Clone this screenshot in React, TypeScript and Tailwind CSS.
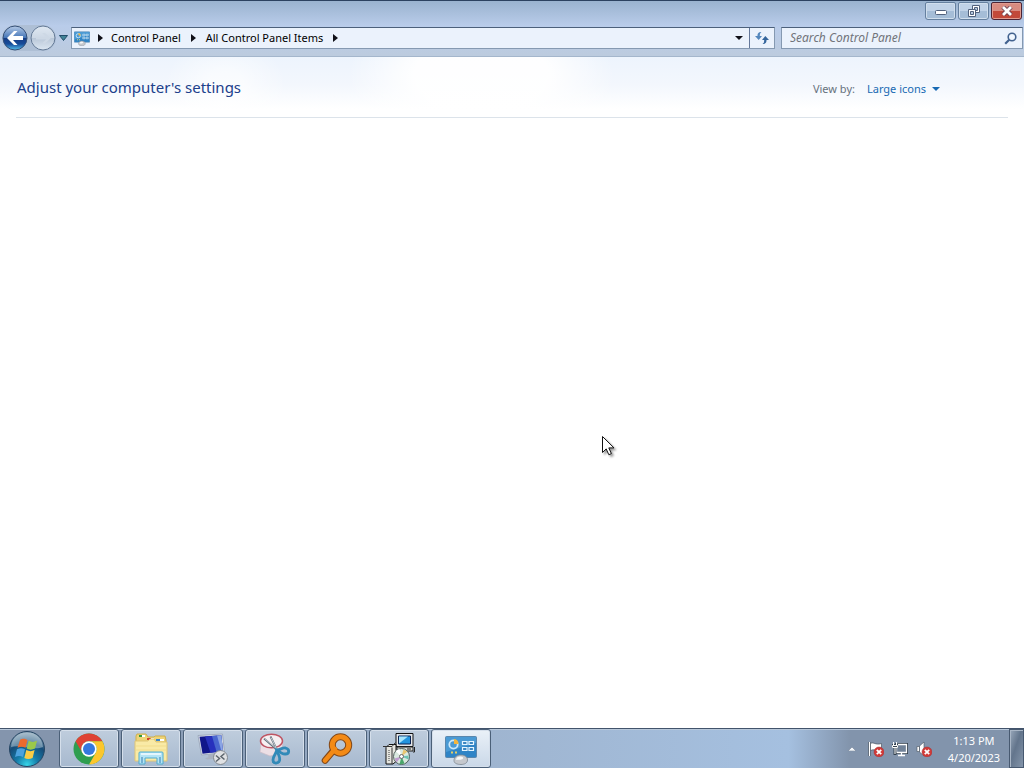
import React from 'react';

const PanelIcon = ({ className }: { className: string }) => (
    <svg viewBox="0 0 32 32" className={className} aria-hidden="true">
        <rect x="0.5" y="3.5" width="31" height="21" rx="1" fill="#2f84c6" stroke="#5a87ad" />
        <path d="M1 4h30v6L1 19z" fill="#59a6dc" opacity="0.65" />
        <circle cx="8.5" cy="11.5" r="4.200" fill="none" stroke="#cbe8fa" strokeWidth="1.800" />
        <path d="M9 11V6a5 5 0 0 1 4.500 5z" fill="#f4b53c" />
        <path d="M17.500 8.500h4.500v3h-4.500zM24 8.500h4.500v3H24zM17.500 14.500h4.500v3h-4.500zM24 14.500h4.500v3H24z" fill="#3c86c0" stroke="#e4f5ff" strokeWidth="1.200" />
        <path d="M6 19.500h2M10 19.500h2" stroke="#e5cf67" strokeWidth="2" />
        <path d="M9 27.500c0-3.500 3-5.500 7-5.500s6.500 2 6.500 5-3 4.500-6.500 4.500-7-1-7-4z" fill="#c5c8cd" stroke="#7e8790" strokeWidth="0.800" />
        <path d="M11 27c0-3 3-3.800 5-3.500 2.500.3 3 2 1 2.800s-4.500.2-6 .7z" fill="#f6f7f8" />
    </svg>
);

const ChromeIcon = () => (
    <svg viewBox="0 0 32 32" className="h-8 w-8" aria-hidden="true">
        <circle cx="16" cy="16" r="15.500" fill="#2f9e50" />
        <path d="M2.600 8.250A15.500 15.500 0 0 1 29.400 8.250H16A7.750 7.750 0 0 0 9.300 19.900z" fill="#df4335" />
        <path d="M29.400 8.250A15.500 15.500 0 0 1 16 31.500l6.700-11.600A7.750 7.750 0 0 0 16 8.250z" fill="#fbc62d" />
        <circle cx="16" cy="16" r="7.750" fill="#fff" />
        <circle cx="16" cy="16" r="6" fill="#3478df" />
    </svg>
);

const ExplorerIcon = () => (
    <svg viewBox="0 0 34 32" className="h-8 w-[34px]" aria-hidden="true">
        <path d="M2 3l1-2h9l2 3h6l1-1h10l1 4v20H2z" fill="#eed477" stroke="#cdae4f" />
        <path d="M5 2h4v2H5z" fill="#2f9a3c" />
        <path d="M13 5h4v2h-4z" fill="#d6402f" />
        <path d="M22 6h4v2h-4z" fill="#3d86ca" />
        <path d="M8 2h3v2H8zM17 5h3v2h-3zM26 6h4v2h-4z" fill="#fff" />
        <path d="M1 8h13l2-2h4l2 3h11v19H1z" fill="#f9eaa6" stroke="#dfc577" />
        <path d="M2 13h30M2 17h30" stroke="#f1dc8b" />
        <path d="M5 31V20q0-1 1-1h22q1 0 1 1v11h-6v-6H11v6z" fill="#b4e4f5" stroke="#51acce" />
        <path d="M7 21h20" stroke="#f4fcff" strokeWidth="1.500" />
        <path d="M8 24v6M26 24v6" stroke="#5e9fc9" strokeWidth="1.500" />
    </svg>
);

const RemoteDesktopIcon = () => (
    <svg viewBox="0 0 32 32" className="h-8 w-8" aria-hidden="true">
        <path d="M1 2.500L25.500 1l2 18.500L4.500 22z" fill="#d9dfe8" stroke="#8f9bb0" strokeWidth="0.700" />
        <path d="M2.500 3.700L24.300 2.300l1.700 16L5.500 20.700z" fill="#10168a" />
        <path d="M8 3.400l8-.500 3.500 16.200-6 .700z" fill="#2731bd" />
        <path d="M15 3l9.300-.700 1.700 16-6.500.800z" fill="#4967cf" />
        <path d="M20 2.600l4.300-.300 1.700 16-1.500.200z" fill="#8aa4e4" />
        <path d="M11 21.400l6-.700 1 3 3 1.500-11 1.300-2-1.200 3.500-1z" fill="#a9b1bf" />
        <circle cx="23.500" cy="24.500" r="7" fill="#dfe1e4" stroke="#83898f" />
        <path d="M19 22.500l3.500 3L19 28.500M27.500 20.500l-3.500 3 3.500 3" fill="none" stroke="#5d656d" strokeWidth="1.500" />
    </svg>
);

const SnippingIcon = () => (
    <svg viewBox="0 0 32 32" className="h-8 w-8" aria-hidden="true">
        <path d="M2 10l-1 9 10 4 11-3 2-10z" fill="#ecdfe5" stroke="#cdbcc7" strokeWidth="0.700" />
        <ellipse cx="12.500" cy="8" rx="11" ry="6.800" fill="#f6f0f2" stroke="#bf5563" strokeWidth="1.500" />
        <path d="M5 5.500l15 13M11.500 3.500l7.500 15.500" stroke="#66727d" strokeWidth="1.800" />
        <path d="M5.500 5.500l13 11M12 4.500l6 12" stroke="#e4e9ed" strokeWidth="0.700" />
        <path d="M18.500 17c2 0 5-2.500 8-2 4.500 1 4 6 0 6-3.500.2-6-2-8-4z" fill="none" stroke="#328ab8" strokeWidth="2.800" />
        <path d="M17.500 18c2 3 4 6 3 9.500-1.200 3.500-6.500 3.500-6.500-.5 0-3.500 2.500-5.500 3.500-9z" fill="none" stroke="#328ab8" strokeWidth="2.800" />
    </svg>
);

const SearchToolIcon = () => (
    <svg viewBox="0 0 32 32" className="h-8 w-8" aria-hidden="true">
        <path d="M12 18L4 27.500" stroke="#81481a" strokeWidth="6.600" strokeLinecap="round" />
        <circle cx="19.500" cy="12" r="8.200" fill="none" stroke="#81481a" strokeWidth="7" />
        <path d="M14 16L4 27.500" stroke="#f38a16" strokeWidth="4.500" strokeLinecap="round" />
        <circle cx="19.500" cy="12" r="8.200" fill="none" stroke="#f38a16" strokeWidth="5" />
    </svg>
);

const InstallerIcon = () => (
    <svg viewBox="0 0 32 32" className="h-8 w-8" aria-hidden="true">
        <path d="M13 .5h17v13H13z" fill="#e5e7e9" stroke="#111" />
        <path d="M15.500 3h12v8h-12z" fill="#2394df" stroke="#0b2352" />
        <path d="M16 10.500l9-7h-9z" fill="#a8e4fb" />
        <path d="M14 14h16v4H14z" fill="#d8d9d5" stroke="#222" />
        <path d="M24 16h4" stroke="#222" />
        <path d="M30 19h1.500v-5" fill="none" stroke="#222" />
        <path d="M3 14.500l3-3h7v17l-3 2.500H3z" fill="#e5e5df" stroke="#111" />
        <path d="M9 14.500V31M0 13.500h9l3.500-4" stroke="#333" fill="none" />
        <path d="M6 17v12" stroke="#777" strokeWidth="1.500" strokeDasharray="1 1" />
        <circle cx="18.500" cy="23.500" r="8" fill="#d9e8df" stroke="#50605d" />
        <path d="M18.500 23.500L12.500 18l4-2z" fill="#fff" />
        <path d="M18.500 23.500l2-7 4 2z" fill="#e8c56f" />
        <path d="M18.500 23.500l7-1v4z" fill="#6cc3b2" />
        <path d="M18.500 23.500l3 7-5 1z" fill="#49a66b" />
        <path d="M18.500 23.500l-7 2 2 4z" fill="#bf9dce" />
        <circle cx="18.500" cy="23.500" r="2" fill="#fff" stroke="#666" />
    </svg>
);

const StartIcon = () => (
    <svg viewBox="0 0 38 38" className="h-[38px] w-[38px]" aria-hidden="true">
        <defs>
            <radialGradient id="orb" cx="50%" cy="95%" r="90%">
                <stop offset="0" stopColor="#37d5e8" />
                <stop offset="0.350" stopColor="#157ba8" />
                <stop offset="0.700" stopColor="#164c78" />
                <stop offset="1" stopColor="#819cb2" />
            </radialGradient>
        </defs>
        <circle cx="19" cy="19" r="17.500" fill="url(#orb)" stroke="#254563" />
        <path d="M3 17C4 7 11 2.500 19 2.500S34 7 35 17c-9 4-22-3-32 0z" fill="#d9e6ed" opacity="0.420" />
        <path d="M12 10c3-2 5-1 7.500 0l-2 7.800c-3-1.500-5-1.500-8 0z" fill="#ec6a2e" />
        <path d="M20.700 10.800c3 1.500 5 1.500 8.300 0l-2 7.800c-3 1.600-6 1.400-8.300 0z" fill="#9bc94a" />
        <path d="M9 19.300c3-1.500 5-1.500 8 0l-2 7.700c-3-1.500-5-1.500-8 0z" fill="#4ca2de" />
        <path d="M18.300 20c3 1.500 5.500 1.500 8.300 0l-2 8c-3 1.500-6 1.300-8.300 0z" fill="#fbcc45" />
    </svg>
);

const tasks = [
    { name: 'Google Chrome', icon: <ChromeIcon /> },
    { name: 'Windows Explorer', icon: <ExplorerIcon /> },
    { name: 'Remote Desktop', icon: <RemoteDesktopIcon /> },
    { name: 'Snipping Tool', icon: <SnippingIcon /> },
    { name: 'Search', icon: <SearchToolIcon /> },
    { name: 'Installer', icon: <InstallerIcon /> },
    { name: 'Control Panel', icon: <PanelIcon className="h-8 w-8" />, active: true },
];

const captionButton = 'flex h-[18px] w-[31px] items-center justify-center rounded-b-[3px] rounded-t-[2px] border border-[#65809f] bg-linear-to-b from-[#c0d2e7] from-50% to-[#a5bdd7] to-50% shadow-[inset_0_0_0_1px_#d0deed]';

const Crumb = ({ children }: { children: string }) => (
    <>
        <button className="leading-4">{children}</button>
        <svg viewBox="0 0 5 8" className="mx-[10px] h-2 w-[5px]" aria-hidden="true"><path d="M0 0l5 4-5 4z" fill="#101018" /></svg>
    </>
);

const WindowFrame = () => (
    <header className="border-b border-t border-[#a4b6cc] border-t-[#2c4260] bg-linear-to-b from-[#9ab3cf] via-[#b9ccea] via-45% to-[#bccbde]">
        <div className="flex justify-end gap-[2px] px-[2px] pt-px">
            <button aria-label="Minimize" className={captionButton}>
                <svg viewBox="0 0 12 6" className="mt-1 h-[6px] w-3"><rect x="0.500" y="0.500" width="11" height="4" rx="1" fill="#fff" stroke="#51617c" /></svg>
            </button>
            <button aria-label="Restore" className={captionButton}>
                <svg viewBox="0 0 12 12" className="h-3 w-3">
                    <path d="M4.500.5h7v7h-7z" fill="#fff" stroke="#51617c" />
                    <path d="M6.500 2.500h3v3h-3z" fill="#b4c8de" stroke="#51617c" />
                    <path d="M.5 4.500h7v7h-7z" fill="#fff" stroke="#51617c" />
                    <path d="M2.500 6.500h3v3h-3z" fill="#b4c8de" stroke="#51617c" />
                </svg>
            </button>
            <button aria-label="Close" className="flex h-[18px] w-[31px] items-center justify-center rounded-b-[3px] rounded-t-[2px] border border-[#4c2434] bg-linear-to-b from-[#d88b80] from-50% to-[#c2493a] to-50% shadow-[inset_0_0_0_1px_#e09b8f]">
                <svg viewBox="0 0 12 10" className="h-[10px] w-3"><path d="M2 1l8 8m0-8L2 9" stroke="#6b4050" strokeWidth="4.500" /><path d="M2 1l8 8m0-8L2 9" stroke="#fff" strokeWidth="2.800" /></svg>
            </button>
        </div>

        {/* Navigation row */}
        <div className="flex items-center pb-[5px] pl-[2px] pr-px pt-[5px]">
            <div className="flex items-center gap-[2px] rounded-full bg-[#aebfd5]">
                <button aria-label="Back">
                    <svg viewBox="0 0 26 26" className="h-[26px] w-[26px]">
                        <defs>
                            <linearGradient id="back" x2="0" y2="1">
                                <stop offset="0" stopColor="#b6cbe7" />
                                <stop offset="0.480" stopColor="#4777b9" />
                                <stop offset="0.500" stopColor="#163c84" />
                                <stop offset="0.750" stopColor="#174c9a" />
                                <stop offset="1" stopColor="#58c2ef" />
                            </linearGradient>
                        </defs>
                        <circle cx="13" cy="13" r="12" fill="url(#back)" stroke="#365077" />
                        <path d="M5 13l7-7h3.500l-4.500 5H21v4H11l4.500 5H12z" fill="#fff" />
                    </svg>
                </button>
                <button aria-label="Forward">
                    <svg viewBox="0 0 26 26" className="h-[26px] w-[26px]">
                        <defs>
                            <linearGradient id="forward" x2="0" y2="1">
                                <stop offset="0" stopColor="#dfe8f2" />
                                <stop offset="0.490" stopColor="#cdd8e5" />
                                <stop offset="0.510" stopColor="#b9c7d8" />
                                <stop offset="1" stopColor="#dce7f2" />
                            </linearGradient>
                        </defs>
                        <circle cx="13" cy="13" r="12" fill="url(#forward)" stroke="#647a97" />
                        <path d="M21 13l-6-5h-3l4 4H6v2.500h10l-4 4h3z" fill="#cdd8e5" />
                    </svg>
                </button>
            </div>
            <button aria-label="Recent pages" className="mx-[3px]">
                <svg viewBox="0 0 9 6" className="h-[6px] w-[9px]"><path d="M.5.5h8l-4 5z" fill="#418497" stroke="#214c6a" /></svg>
            </button>
            <div className="flex h-[22px] min-w-0 flex-1 items-center border border-[#8599b1] border-t-[#4c607b] bg-[#ebf2fc] text-[11px] text-black">
                <PanelIcon className="ml-[2px] h-4 w-4 shrink-0" />
                <svg viewBox="0 0 5 8" className="mx-2 h-2 w-[5px]" aria-hidden="true"><path d="M0 0l5 4-5 4z" fill="#101018" /></svg>
                <Crumb>Control Panel</Crumb>
                <Crumb>All Control Panel Items</Crumb>
                <button aria-label="Previous locations" className="ml-auto px-[6px]">
                    <svg viewBox="0 0 8 4" className="h-1 w-2"><path d="M0 0h8L4 4z" fill="#101018" /></svg>
                </button>
                <button aria-label="Refresh" className="flex h-full w-[25px] items-center justify-center border-l border-[#63779a]">
                    <svg viewBox="0 0 14 12" className="h-3 w-[14px]">
                        <path d="M6.500 0C3 0 2.500 2 2.500 4H0l3.700 4L7 4H4.800c0-2 .2-3 1.700-4z" fill="#5487bd" />
                        <path d="M7.500 12c3.500 0 4-2 4-4H14l-3.700-4L7 8h2.200c0 2-.2 3-1.700 4z" fill="#34659c" />
                    </svg>
                </button>
            </div>
            <div className="ml-[6px] flex h-[22px] w-[242px] items-center border border-[#8599b1] border-t-[#4c607b] bg-[#ebf2fc] pl-2 pr-[5px]">
                <input type="text" aria-label="Search Control Panel" placeholder="Search Control Panel" className="min-w-0 flex-1 bg-transparent text-xs italic text-[#333] outline-none placeholder:text-[#71747b]" />
                <button aria-label="Search">
                    <svg viewBox="0 0 13 13" className="h-[13px] w-[13px]"><circle cx="8" cy="5" r="3.800" fill="#f0f7ff" stroke="#42628f" strokeWidth="1.600" /><path d="M5.200 7.800L1.200 11.800" stroke="#42628f" strokeWidth="2.200" /></svg>
                </button>
            </div>
        </div>
    </header>
);

const ErrorBadge = () => (
    <>
        <circle cx="11" cy="11" r="5" fill="#d23b38" stroke="#a53137" strokeWidth="0.500" />
        <path d="M8.800 8.800l4.400 4.400m0-4.400l-4.400 4.400" stroke="#fff" strokeWidth="1.800" />
    </>
);

const Taskbar = () => (
    <footer className="flex h-10 shrink-0 border-t border-[#42536b] bg-[linear-gradient(90deg,#8495ad_0%,#8495ad_6%,#9fb5d0_48%,#a5c0e0_77%,#8294ac_83%,#8294ac_100%)] shadow-[inset_0_1px_0_#b8c8da]">
        <button aria-label="Start" className="mr-[13px] pl-2"><StartIcon /></button>
        <nav className="flex gap-[2px]" aria-label="Running programs">
            {tasks.map((task) => (
                <button
                    key={task.name}
                    aria-label={task.name}
                    className={`flex h-full w-[60px] items-center justify-center rounded-[3px] border border-[#4b6078] bg-linear-to-b shadow-[inset_0_0_0_1px_#d5dfeb] ${task.active ? 'from-[#eaf1f8] to-[#cad8e8]' : 'from-[#bfcddd] to-[#a7b9cf]'}`}
                >
                    {task.icon}
                </button>
            ))}
        </nav>
        <div className="ml-auto flex items-center">
            <button aria-label="Show hidden icons" className="mr-3">
                <svg viewBox="0 0 8 4" className="h-1 w-2"><path d="M0 4h8L4 0z" fill="#f4f7fa" stroke="#66758a" strokeWidth="0.500" /></svg>
            </button>
            <div className="flex gap-2">
                <button aria-label="Action Center">
                    <svg viewBox="0 0 16 16" className="h-4 w-4">
                        <path d="M1.500 15V1" stroke="#394653" strokeWidth="2.500" /><path d="M1.500 15V1" stroke="#fff" strokeWidth="1.300" />
                        <path d="M2.500 2.500c3-2 5 2 11 0v6c-5 2-8-1-11 1z" fill="#fff" stroke="#4c5661" strokeWidth="0.700" />
                        <ErrorBadge />
                    </svg>
                </button>
                <button aria-label="Network">
                    <svg viewBox="0 0 16 16" className="h-4 w-4">
                        <path d="M4.500 3.500h10v8h-10z" fill="#75869c" stroke="#303c49" strokeWidth="3" />
                        <path d="M4.500 3.500h10v8h-10zM9.500 12v2M6 14.500h7" fill="#718298" stroke="#fff" strokeWidth="1.300" />
                        <path d="M0 3h6v4H4.500v7h-3V7H0z" fill="#35424f" />
                        <path d="M1.500 1v4M4.500 1v4M.5 4.500h5v2h-5zM3 6v7" fill="none" stroke="#fff" />
                    </svg>
                </button>
                <button aria-label="Volume, muted">
                    <svg viewBox="0 0 16 16" className="h-4 w-4">
                        <path d="M1 5.500h2l5-4.500v14l-5-4.500H1z" fill="#fff" stroke="#485360" strokeWidth="0.600" />
                        <path d="M3.500 5v6" stroke="#6a7480" />
                        <ErrorBadge />
                    </svg>
                </button>
            </div>
            <button className="ml-4 mr-[9px] text-center text-[11px] leading-[17px] text-white">
                <time dateTime="2023-04-20T13:13" className="flex flex-col"><span>1:13 PM</span><span>4/20/2023</span></time>
            </button>
            <button aria-label="Show desktop" className="h-full w-[15px] border border-[#475970] bg-linear-to-br from-[#9aa9bb] via-[#63758c] via-45% to-[#8495aa] shadow-[inset_1px_1px_0_#a9b6c6]" />
        </div>
    </footer>
);

const App = () => {
    return (
        <div className="relative flex h-screen flex-col overflow-hidden bg-white font-['Noto_Sans','Open_Sans',sans-serif]">
            <WindowFrame />
            <main className="min-h-0 flex-1">
                {/* Pale sky with soft clouds behind the heading */}
                <div className="bg-[radial-gradient(ellipse_13%_120%_at_47%_30%,#fffffff0_50%,#ffffff00_100%),radial-gradient(ellipse_6%_80%_at_22%_50%,#ffffff99_30%,#ffffff00_100%),linear-gradient(180deg,#edf4fd,#f3f7fd_45%,#fff_85%)] px-4">
                    <div className="flex h-[61px] items-center border-b border-[#dce3ea] pl-px pr-[68px]">
                        <div className="flex flex-1 items-baseline justify-between">
                            <h1 className="text-[15px] leading-5 text-[#20408b]">Adjust your computer's settings</h1>
                            <div className="flex items-baseline text-[11px]">
                                <span id="view-by" className="mr-3 text-[#67717d]">View by:</span>
                                <button aria-labelledby="view-by view-value" className="flex items-center gap-[6px] text-[#1769b3]">
                                    <span id="view-value">Large icons</span>
                                    <svg viewBox="0 0 8 4" className="h-1 w-2" aria-hidden="true"><path d="M0 0h8L4 4z" fill="#1769b3" /></svg>
                                </button>
                            </div>
                        </div>
                    </div>
                </div>
            </main>
            <Taskbar />

            {/* Mouse pointer */}
            <svg viewBox="0 0 14 22" className="pointer-events-none absolute left-[59%] top-[436px] -ml-[2px] h-[22px] w-[14px] drop-shadow-[2px_2px_1px_#00000066]" aria-hidden="true">
                <path d="M.5.500v16l3.700-3.600 2.600 5.800 2.600-1.100-2.600-5.700h5.200z" fill="#fff" stroke="#111" />
            </svg>
        </div>
    );
};

export default App;
